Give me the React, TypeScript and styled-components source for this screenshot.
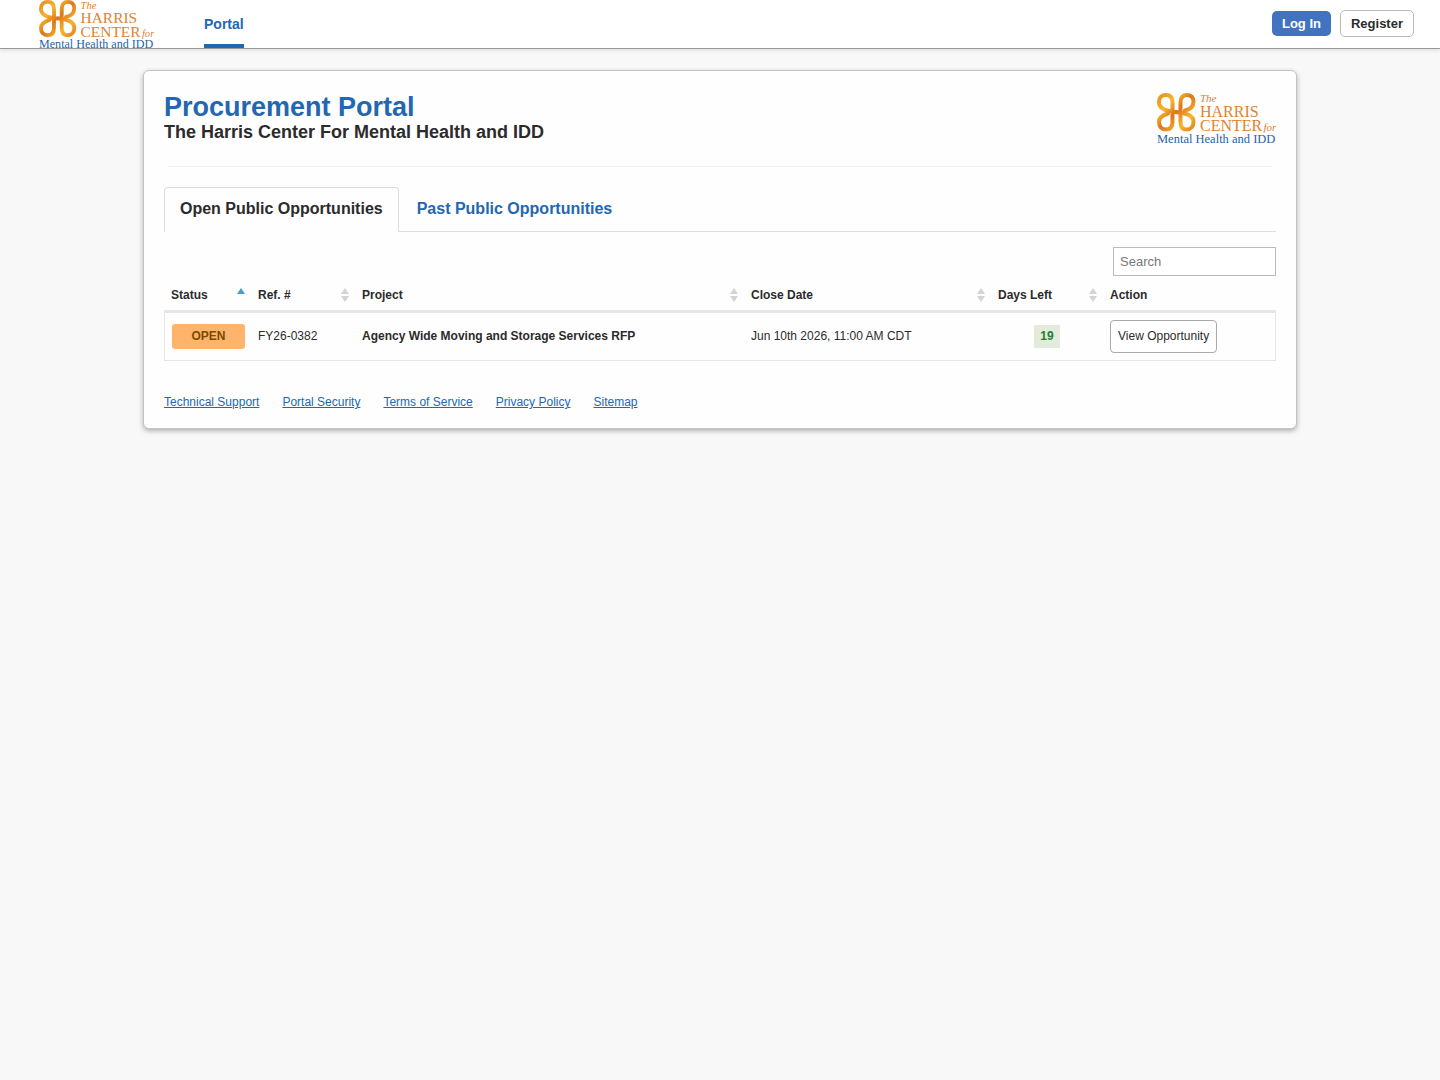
import React, { useState } from "react";
import styled, { createGlobalStyle } from "styled-components";

const GlobalStyle = createGlobalStyle`
  *, *::before, *::after { box-sizing: border-box; }
  body {
    margin: 0;
    background: #f8f8f8;
    color: #2b2b2b;
    font-family: "Liberation Sans", Arial, sans-serif;
    font-size: 12px;
    line-height: 16px;
  }
  button, input { font-family: inherit; }
`;

const blue = "#2467b1";

const TopBar = styled.header`
  display: flex;
  align-items: center;
  height: 49px;
  padding: 0 26px 0 39px;
  background: #fff;
  border-bottom: 1px solid #999;
  box-shadow: 0 1px 4px rgba(0, 0, 0, 0.12);
`;

const BrandLink = styled.a`
  display: flex;
  align-items: flex-start;
  height: 48px;
  margin-right: 50px;
`;

const LogoSvg = styled.svg<{ $width: number }>`
  display: block;
  flex: none;
  width: ${(p) => p.$width}px;
  height: auto;
  font-family: "Liberation Serif", "Times New Roman", serif;
`;

const MainNav = styled.nav`
  display: flex;
  align-self: stretch;
  flex: 1;
`;

const NavLink = styled.a`
  display: flex;
  align-items: center;
  padding-top: 4px;
  border-bottom: 4px solid ${blue};
  color: ${blue};
  font-size: 14px;
  font-weight: bold;
  text-decoration: none;
`;

const AuthActions = styled.div`
  display: flex;
  align-items: center;
  gap: 9px;
  padding-bottom: 1px;
`;

const AuthButton = styled.button<{ $primary?: boolean }>`
  height: ${(p) => (p.$primary ? 25 : 27)}px;
  padding: 0 10px;
  border: ${(p) => (p.$primary ? "0" : "1px solid #bbb")};
  border-radius: 5px;
  background: ${(p) => (p.$primary ? "#4273c0" : "#fff")};
  color: ${(p) => (p.$primary ? "#fff" : "#2b2b2b")};
  font-size: 13px;
  font-weight: bold;
  cursor: pointer;
`;

const Card = styled.main`
  box-sizing: content-box;
  width: 80%;
  margin: 21px auto;
  border: 1px solid #c4c4c4;
  border-radius: 6px;
  background: #fefefe;
  box-shadow: 0 2px 5px rgba(0, 0, 0, 0.3);
`;

const CardBody = styled.div`
  padding: 22px 20px 18px;
`;

const CardHeader = styled.div`
  display: flex;
  justify-content: space-between;
  align-items: flex-start;
  height: 73px;
`;

const Title = styled.h1`
  margin: 0;
  color: ${blue};
  font-size: 27px;
  line-height: 28px;
`;

const Subtitle = styled.h2`
  margin: 0;
  font-size: 18px;
  line-height: 22px;
`;

const Divider = styled.hr`
  height: 1px;
  margin: 0 4px 20px;
  border: 0;
  background: #f2f2f2;
`;

const Tabs = styled.div`
  display: flex;
  gap: 2px;
  border-bottom: 1px solid #ddd;
`;

const Tab = styled.button<{ $active: boolean }>`
  height: 45px;
  margin-bottom: -1px;
  padding: 0 15px 2px;
  border: 1px solid ${(p) => (p.$active ? "#ddd" : "transparent")};
  border-bottom-color: ${(p) => (p.$active ? "#fefefe" : "transparent")};
  border-radius: 4px 4px 0 0;
  background: ${(p) => (p.$active ? "#fefefe" : "transparent")};
  color: ${(p) => (p.$active ? "#2b2b2b" : blue)};
  font-size: 16px;
  font-weight: bold;
  cursor: pointer;
`;

const Toolbar = styled.div`
  display: flex;
  justify-content: flex-end;
  padding-top: 15px;
`;

const SearchInput = styled.input`
  width: 163px;
  height: 29px;
  padding: 0 6px;
  border: 1px solid #bbb;
  border-radius: 0;
  background: #fff;
  font-size: 13px;
  &::placeholder { color: #777; }
`;

const Table = styled.table`
  width: 100%;
  table-layout: fixed;
  border-collapse: separate;
  border-spacing: 0;
`;

const Column = styled.col<{ $width?: number }>`
  width: ${(p) => (p.$width ? `${p.$width}px` : "auto")};
`;

const HeadCell = styled.th`
  height: 37px;
  padding: 4px 6px 0 7px;
  border-bottom: 3px solid #e6e6e6;
  text-align: left;
`;

const SortButton = styled.button`
  display: flex;
  justify-content: space-between;
  align-items: center;
  width: 100%;
  padding: 0;
  border: 0;
  background: none;
  color: inherit;
  font-size: 12px;
  font-weight: bold;
  line-height: 16px;
  text-align: left;
  cursor: pointer;
`;

const Cell = styled.td<{ $align?: string; $bold?: boolean }>`
  height: 48px;
  padding: 0 7px 1px;
  border-bottom: 1px solid #e6e6e6;
  font-weight: ${(p) => (p.$bold ? "bold" : "normal")};
  text-align: ${(p) => p.$align ?? "left"};
  &:first-child { border-left: 1px solid #e6e6e6; padding-right: 6px; }
  &:last-child { border-right: 1px solid #e6e6e6; }
`;

const StatusBadge = styled.span`
  display: block;
  border-radius: 3px;
  background: #ffb36b;
  color: #7a4a00;
  font-weight: bold;
  line-height: 25px;
  text-align: center;
`;

const DaysBadge = styled.span`
  display: inline-block;
  padding: 0 6px;
  background: #e3ebdc;
  color: #23802f;
  font-weight: bold;
  line-height: 23px;
`;

const ViewButton = styled.button`
  height: 33px;
  padding: 0 7px 1px;
  border: 1px solid #aaa;
  border-radius: 4px;
  background: #fff;
  color: #2b2b2b;
  font-size: 12px;
  white-space: nowrap;
  cursor: pointer;
`;

const FooterLinks = styled.footer`
  display: flex;
  flex-wrap: wrap;
  gap: 23px;
  margin-top: 33px;
`;

const FooterLink = styled.a`
  color: ${blue};
  text-decoration: underline;
`;

function Logo({ id, width }: { id: string; width: number }) {
  const fill = `url(#${id})`;
  return (
    <LogoSvg $width={width} viewBox="0 0 238 106" role="img" aria-label="The Harris Center for Mental Health and IDD">
      <defs>
        <linearGradient id={id} gradientUnits="userSpaceOnUse" x1="0" y1="0" x2="76" y2="76">
          <stop offset="0" stopColor="#e58a1f" />
          <stop offset="0.3" stopColor="#f6b52c" />
          <stop offset="0.5" stopColor="#dd761c" />
          <stop offset="0.75" stopColor="#f8b62b" />
          <stop offset="1" stopColor="#df7a1d" />
        </linearGradient>
      </defs>
      <g fill="none" stroke={fill} strokeWidth="8" strokeLinecap="round">
        <path d="M38 38 C24 37 4 34 4 18 C4 9 10 4 18 4 C27 4 31 10 31 19 V58 C31 67 27 73 18 73 C9 73 4 67 4 58 C4 48 12 44 22 41" />
        <path d="M38 38 C52 40 73 42 73 58 C73 67 67 73 59 73 C51 73 47 67 47 58 V19 C47 10 51 4 60 4 C68 4 73 9 73 17 C73 28 66 33 56 35" />
      </g>
      <g fill="#e0832f">
        <text x="86" y="18" fontSize="22" fontStyle="italic">The</text>
        <text x="86" y="47" fontSize="32">HARRIS</text>
        <text x="86" y="76" fontSize="32">CENTER</text>
        <text x="213" y="76" fontSize="22" fontStyle="italic">for</text>
      </g>
      <text x="0" y="99" fontSize="25" fill="#1f64a8">Mental Health and IDD</text>
    </LogoSvg>
  );
}

function SortIcon({ active }: { active?: boolean }) {
  return (
    <svg width="8" height="14" viewBox="0 0 8 14" aria-hidden="true">
      <path d="M4 0 L8 6 H0 Z" fill={active ? "#4a9fc9" : "#d4d4d4"} />
      {!active && <path d="M0 8 H8 L4 14 Z" fill="#d4d4d4" />}
    </svg>
  );
}

const columns = [
  { label: "Status", width: 87 },
  { label: "Ref. #", width: 104 },
  { label: "Project" },
  { label: "Close Date", width: 247 },
  { label: "Days Left", width: 112 },
  { label: "Action", width: 173 },
];

const opportunities = [
  {
    status: "OPEN",
    ref: "FY26-0382",
    project: "Agency Wide Moving and Storage Services RFP",
    close: "Jun 10th 2026, 11:00 AM CDT",
    days: 19,
  },
];

const tabs = ["Open Public Opportunities", "Past Public Opportunities"];
const links = ["Technical Support", "Portal Security", "Terms of Service", "Privacy Policy", "Sitemap"];

export default function App() {
  const [activeTab, setActiveTab] = useState(0);
  return (
    <>
      <GlobalStyle />
      <TopBar>
        <BrandLink href="#">
          <Logo id="brand-gold" width={115} />
        </BrandLink>
        <MainNav>
          <NavLink href="#">Portal</NavLink>
        </MainNav>
        <AuthActions>
          <AuthButton $primary>Log In</AuthButton>
          <AuthButton>Register</AuthButton>
        </AuthActions>
      </TopBar>
      <Card>
        <CardBody>
          <CardHeader>
            <div>
              <Title>Procurement Portal</Title>
              <Subtitle>The Harris Center For Mental Health and IDD</Subtitle>
            </div>
            <Logo id="card-gold" width={119} />
          </CardHeader>
          <Divider />
          <Tabs role="tablist">
            {tabs.map((label, i) => (
              <Tab key={label} role="tab" aria-selected={i === activeTab} $active={i === activeTab} onClick={() => setActiveTab(i)}>
                {label}
              </Tab>
            ))}
          </Tabs>
          <Toolbar>
            <SearchInput type="text" placeholder="Search" aria-label="Search" />
          </Toolbar>
          <Table>
            <colgroup>
              {columns.map((c) => (
                <Column key={c.label} $width={c.width} />
              ))}
            </colgroup>
            <thead>
              <tr>
                {columns.map((c, i) => (
                  <HeadCell key={c.label} scope="col">
                    {c.label === "Action" ? (
                      c.label
                    ) : (
                      <SortButton>
                        {c.label}
                        <SortIcon active={i === 0} />
                      </SortButton>
                    )}
                  </HeadCell>
                ))}
              </tr>
            </thead>
            <tbody>
              {opportunities.map((o) => (
                <tr key={o.ref}>
                  <Cell><StatusBadge>{o.status}</StatusBadge></Cell>
                  <Cell>{o.ref}</Cell>
                  <Cell $bold>{o.project}</Cell>
                  <Cell>{o.close}</Cell>
                  <Cell $align="center"><DaysBadge>{o.days}</DaysBadge></Cell>
                  <Cell><ViewButton>View Opportunity</ViewButton></Cell>
                </tr>
              ))}
            </tbody>
          </Table>
          <FooterLinks>
            {links.map((label) => (
              <FooterLink key={label} href="#">{label}</FooterLink>
            ))}
          </FooterLinks>
        </CardBody>
      </Card>
    </>
  );
}
